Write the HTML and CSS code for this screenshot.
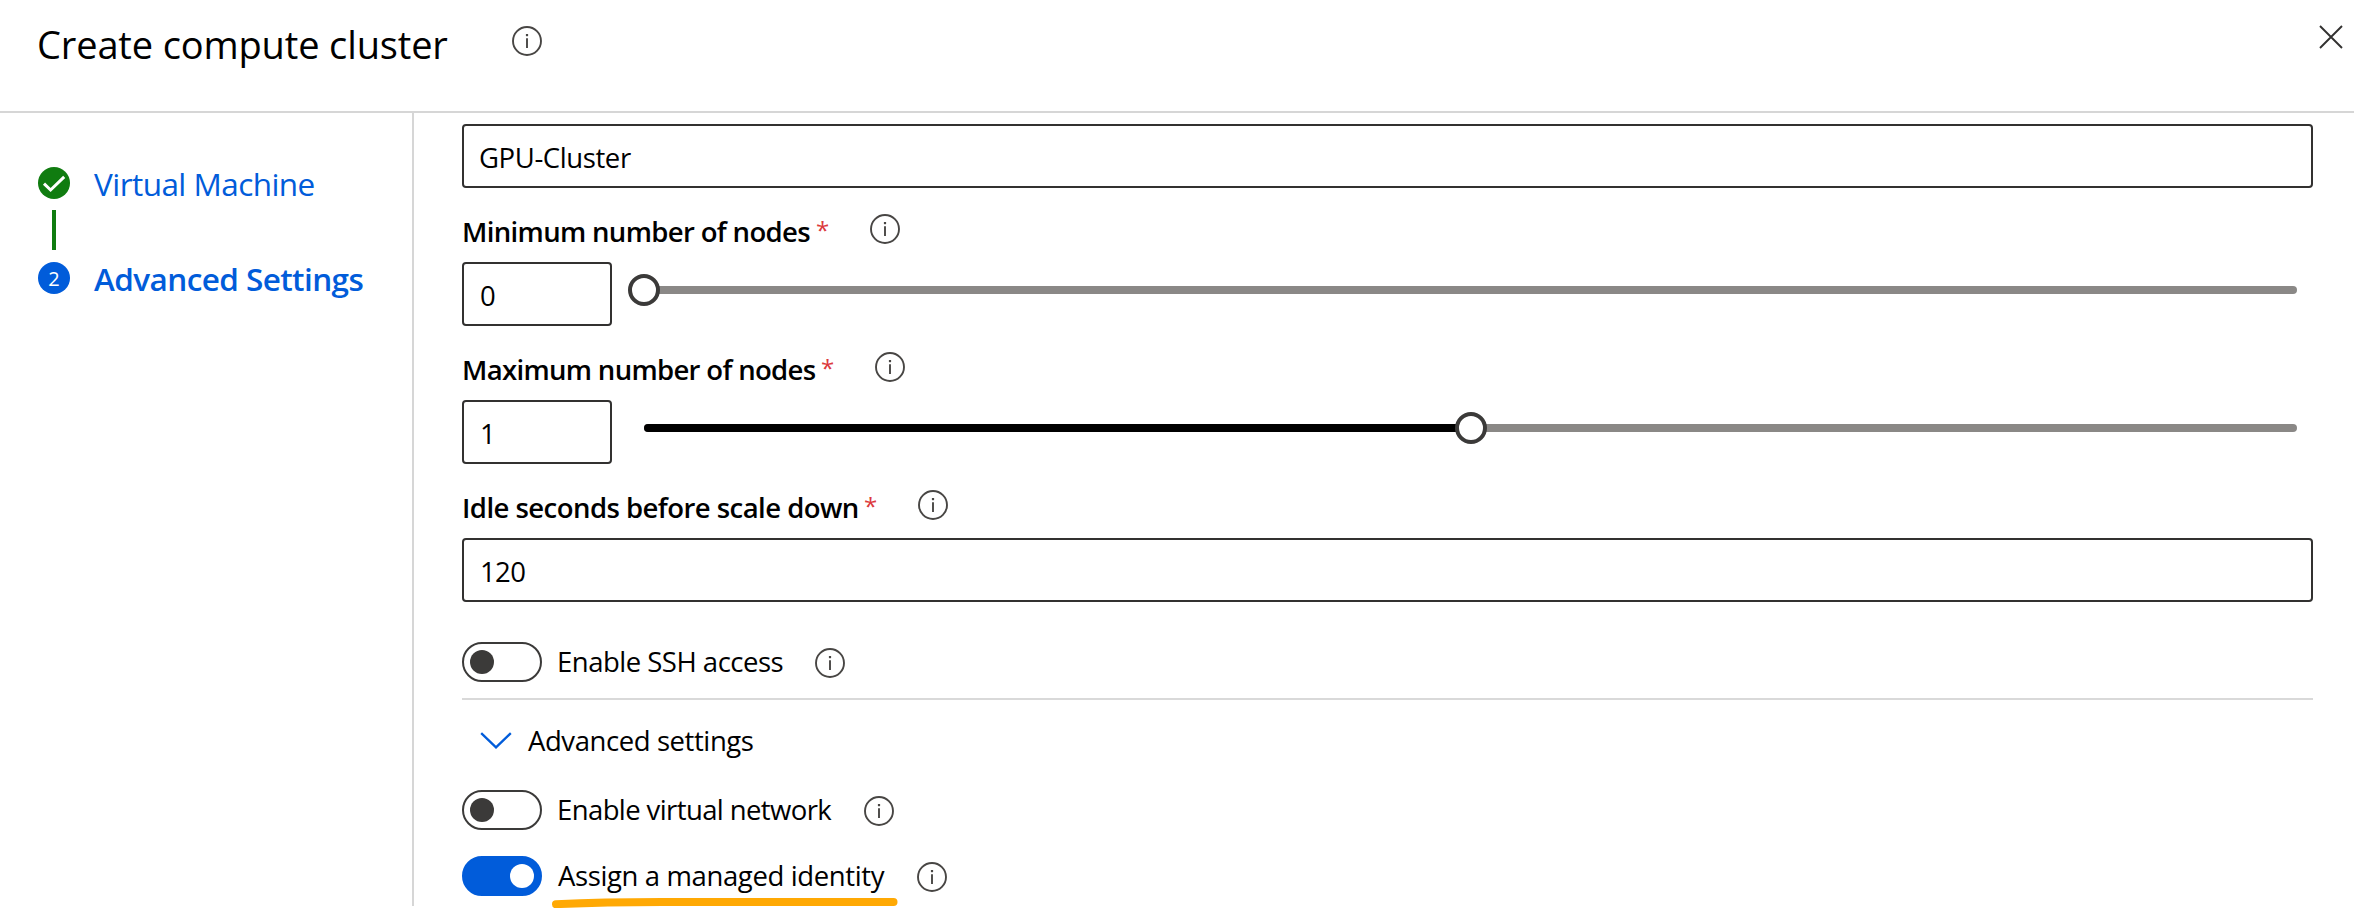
FILE: index.html
```html
<!DOCTYPE html>
<html lang="en">
<head>
<meta charset="utf-8">
<title>Create compute cluster</title>
<link rel="stylesheet" href="styles.css">
</head>
<body>
<svg class="defs" aria-hidden="true">
  <symbol id="info" viewBox="0 0 30 30">
    <circle cx="15" cy="15" r="14" fill="none" stroke="#484644" stroke-width="1.9"/>
    <path d="M15 12.2V22" stroke="#484644" stroke-width="1.9"/>
    <path d="M15 8v2.2" stroke="#484644" stroke-width="2.2"/>
  </symbol>
</svg>
<header class="header">
  <h1 class="title">Create compute cluster</h1>
  <svg class="info info-title"><use href="#info"/></svg>
  <svg class="close" viewBox="0 0 24 24"><path d="M1 1l22 22M23 1L1 23" stroke="#323130" stroke-width="1.9" fill="none"/></svg>
</header>
<div class="body">
  <nav class="steps">
    <div class="step">
      <span class="dot done"><svg viewBox="0 0 32 32"><path d="M6 16.6l6.600 6.4L26.2 9.800" fill="none" stroke="#fff" stroke-width="3"/></svg></span>
      <span class="step-label">Virtual Machine</span>
    </div>
    <div class="connector"></div>
    <div class="step">
      <span class="dot current">2</span>
      <span class="step-label active">Advanced Settings</span>
    </div>
  </nav>
  <main class="form">
    <div class="input name">GPU-Cluster</div>
    <div class="label"><span class="t-min">Minimum number of nodes</span><span class="req">*</span><svg class="info"><use href="#info"/></svg></div>
    <div class="range">
      <div class="input small">0</div>
      <div class="slider"><div class="thumb"></div></div>
    </div>
    <div class="label"><span class="t-max">Maximum number of nodes</span><span class="req">*</span><svg class="info"><use href="#info"/></svg></div>
    <div class="range">
      <div class="input small">1</div>
      <div class="slider"><div class="fill"></div><div class="thumb mid"></div></div>
    </div>
    <div class="label"><span class="t-idle">Idle seconds before scale down</span><span class="req">*</span><svg class="info"><use href="#info"/></svg></div>
    <div class="input">120</div>
    <div class="option ssh"><span class="toggle"></span><span class="t-ssh">Enable SSH access</span><svg class="info"><use href="#info"/></svg></div>
    <div class="advanced">
      <svg class="chevron" viewBox="0 0 32 17"><path d="M1.2 1.2L16 15.3 30.8 1.2" fill="none" stroke="#015cda" stroke-width="2.3"/></svg>
      <span>Advanced settings</span>
    </div>
    <div class="option vnet"><span class="toggle"></span><span class="t-vnet">Enable virtual network</span><svg class="info"><use href="#info"/></svg></div>
    <div class="option identity"><span class="toggle on"></span><span class="t-identity">Assign a managed identity</span><svg class="info"><use href="#info"/></svg>
      <svg class="marker" viewBox="0 0 346 11"><path d="M4 6.2Q50 4 110 4H341.500" fill="none" stroke="#ffa904" stroke-width="8" stroke-linecap="round"/></svg>
    </div>
  </main>
</div>
</body>
</html>
```
FILE: styles.css
```css
* { box-sizing: border-box; }
html, body { margin: 0; height: 908px; overflow: hidden; }
body {
  background: #fff;
  color: #000;
  font: 400 27.5px/40px "Open Sans", "Noto Sans", sans-serif;
  white-space: nowrap;
}
svg { display: block; flex: none; }
.defs { position: absolute; width: 0; height: 0; }

.header {
  display: flex;
  align-items: flex-start;
  height: 113px;
  padding-left: 37px;
  border-bottom: 2px solid #d6d6d6;
}
.title {
  width: 474.5px;
  margin: 18px 0 0;
  font-size: 38px;
  font-weight: 400;
  line-height: 52px;
  letter-spacing: -0.14px;
}
.info { width: 30px; height: 30px; }
.info-title { margin-top: 26px; }
.close { width: 24px; height: 24px; margin: 25px 11px 0 auto; }

.body { display: flex; height: 793px; }
.steps {
  flex: none;
  width: 414px;
  padding: 49px 0 0 38px;
  border-right: 2px solid #d6d6d6;
}
.step { display: flex; align-items: flex-start; gap: 24px; height: 44px; }
.dot {
  width: 32px;
  height: 32px;
  margin-top: 5px;
  border-radius: 50%;
  color: #fff;
  font-size: 20px;
  line-height: 33px;
  text-align: center;
}
.done { background: #107c10; }
.current { background: #015cda; }
.step-label { color: #015cda; font-size: 31.5px; line-height: 44px; letter-spacing: -0.55px; }
.step-label.active { font-weight: 600; letter-spacing: -0.58px; }
.connector { width: 4px; height: 40px; margin: 4px 0 7px 14px; background: #107c10; }

.form { flex: 1; padding: 11px 41px 0 48px; }
.input {
  height: 64px;
  padding: 12px 16px;
  border: 2px solid #323130;
  border-radius: 4px;
  letter-spacing: -0.6px;
}
.input.name { padding-left: 15px; letter-spacing: -0.4px; }
.input.small { flex: none; width: 150px; }

.label { display: flex; height: 74px; padding-top: 24px; font-weight: 600; }
.req { width: 54px; margin-left: 4px; color: #dc3a3c; font-size: 24px; font-weight: 400; line-height: 35px; }
.label .info { margin-top: 2px; }
.t-min { width: 350px; letter-spacing: -0.65px; }
.t-max { width: 355px; letter-spacing: -0.67px; }
.t-idle { width: 398px; letter-spacing: -0.54px; }

.range { display: flex; }
.slider {
  position: relative;
  flex: 1;
  height: 8px;
  margin: 24px 16px 0 32px;
  border-radius: 4px;
  background: #8a8886;
}
.fill { width: 50%; height: 8px; border-radius: 4px; background: #000; }
.thumb {
  position: absolute;
  top: -12px;
  left: -16px;
  width: 32px;
  height: 32px;
  border: 4px solid #3b3a39;
  border-radius: 50%;
  background: #fff;
}
.thumb.mid { left: calc(50% - 16px); }

.option { position: relative; display: flex; height: 40px; }
.ssh { margin-top: 40px; }
.identity { margin-top: 26px; }
.option .info { margin-top: 6px; }
.toggle {
  display: flex;
  align-items: center;
  width: 80px;
  height: 40px;
  margin-right: 15px;
  padding: 0 6px;
  border: 2px solid #3b3a39;
  border-radius: 20px;
}
.toggle::before { content: ""; width: 24px; height: 24px; border-radius: 50%; background: #3b3a39; }
.toggle.on { justify-content: flex-end; border-color: #015cda; background: #015cda; }
.toggle.on::before { background: #fff; }
.t-ssh { width: 258px; letter-spacing: -0.5px; }
.t-vnet { width: 307px; letter-spacing: -0.6px; }
.t-identity { width: 360px; padding-left: 1px; letter-spacing: -0.38px; }

.advanced {
  display: flex;
  gap: 16px;
  height: 92px;
  margin-top: 16px;
  padding: 21px 0 0 18px;
  border-top: 2px solid #d9d9d9;
  letter-spacing: -0.42px;
}
.chevron { width: 32px; height: 17px; margin-top: 11px; }
.marker { position: absolute; top: 42px; left: 90px; width: 346px; height: 11px; }
```
